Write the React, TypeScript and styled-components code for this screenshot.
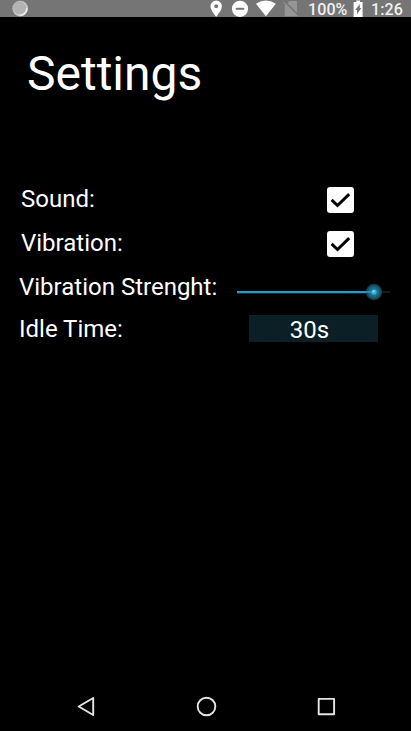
import React, { useState } from 'react';
import styled, { createGlobalStyle } from 'styled-components';

const GlobalStyle = createGlobalStyle`
  * { box-sizing: border-box; }
  body { margin: 0; background: #000; }
`;

const Screen = styled.div`
  display: flex;
  flex-direction: column;
  width: 411px;
  height: 731px;
  background: #000;
  color: #fff;
  font-family: Roboto, sans-serif;
`;

const StatusBar = styled.header`
  display: flex;
  justify-content: space-between;
  height: 17px;
  background: #757575;
`;

const StatusIcons = styled.svg`
  display: block;
  height: 17px;
  flex: none;
`;

const StatusGroup = styled.div`
  display: flex;
  width: 203px;
`;

const StatusText = styled.span<{ $width: number }>`
  width: ${(p) => p.$width}px;
  font-size: 16px;
  font-weight: 500;
  line-height: 20px;
  letter-spacing: 0.1px;
  color: #f0f0f0;
  white-space: nowrap;
`;

const Content = styled.main`
  flex: 1;
  padding-top: 29px;
`;

const Title = styled.h1`
  margin: 0 0 83px 27px;
  font-size: 48px;
  font-weight: 400;
  line-height: 56px;
`;

const Row = styled.div<{ $indent: number; $height: number }>`
  display: flex;
  align-items: flex-start;
  height: ${(p) => p.$height}px;
  padding-left: ${(p) => p.$indent}px;
`;

const Label = styled.label<{ $width: number }>`
  flex: none;
  width: ${(p) => p.$width}px;
  font-size: 24px;
  line-height: 28px;
  white-space: nowrap;
`;

const Box = styled.button`
  display: block;
  width: 27px;
  height: 26px;
  margin-top: 2px;
  padding: 0;
  border: 0;
  border-radius: 3px;
  background: #fff;
`;

const CheckMark = styled.svg`
  display: block;
`;

const Slider = styled.svg`
  display: block;
  margin-top: 9px;
`;

const TimeField = styled.div`
  width: 129px;
  height: 27px;
  background: #0a2026;
  font-size: 24px;
  line-height: 30px;
  text-align: center;
  padding-right: 8px;
`;

const NavBar = styled.nav`
  display: flex;
  justify-content: space-between;
  align-items: center;
  height: 48px;
  padding: 0 72px 0 74px;
`;

function CheckBox({ label }: { label: string }) {
  const [on, setOn] = useState(true);
  return (
    <Box role="checkbox" aria-label={label} aria-checked={on} onClick={() => setOn(!on)}>
      <CheckMark width="27" height="26" viewBox="0 0 27 26">
        {on && <path d="M4.6 12.9 10.5 18.5 22.2 7.2" fill="none" stroke="#050505" strokeWidth="3" />}
      </CheckMark>
    </Box>
  );
}

export default function App() {
  return (
    <Screen>
      <GlobalStyle />
      <StatusBar>
        <StatusIcons width="40" height="17" viewBox="0 0 40 17">
          <circle cx="20.2" cy="8.6" r="7.8" fill="#c9c9c9" />
          <circle cx="19.5" cy="7.8" r="6" fill="#b3b3b3" stroke="#a4a4a4" strokeWidth="1" strokeDasharray="1 1" />
          <path d="M19.5 15.2A7 7 0 0 0 27 8.2" fill="none" stroke="#ededed" strokeWidth="1.6" />
        </StatusIcons>
        <StatusGroup>
          <StatusIcons width="100" height="17" viewBox="208 0 100 17">
            <path fill="#fff" fillRule="evenodd" d="M216.2 .6a5.7 5.7 0 0 0-5.7 5.7c0 4.2 5.7 10.5 5.7 10.5s5.7-6.3 5.7-10.5A5.7 5.7 0 0 0 216.2 .6zm0 3.7a2 2 0 1 1 0 4 2 2 0 0 1 0-4z" />
            <circle cx="240" cy="8.8" r="8.1" fill="#fff" />
            <rect x="235.8" y="7.8" width="8.4" height="2" fill="#757575" />
            <path d="M256 3.8Q265.8-2.8 275.8 3.8L265.9 16.2z" fill="#fff" />
            <path d="M289.5 1H297V16.2H284.7V5.5z" fill="#959595" />
            <path d="m284.4 1.2 14 14" stroke="#717171" strokeWidth="1.3" />
            <path d="m283.6 2.2 14 14" stroke="#929292" strokeWidth="1.2" />
          </StatusIcons>
          <StatusText $width={45}>100%</StatusText>
          <StatusIcons width="18" height="17" viewBox="353 0 18 17">
            <path d="M356.3 .5h3.8V2h2.5v15h-9V2h2.7z" fill="#fff" />
            <path d="M359.8 4v4h1.5L357 14.2V9.9h-1.8z" fill="#757575" />
          </StatusIcons>
          <StatusText $width={40}>1:26</StatusText>
        </StatusGroup>
      </StatusBar>
      <Content>
        <Title>Settings</Title>
        <Row $indent={21} $height={44}>
          <Label $width={306}>Sound:</Label>
          <CheckBox label="Sound" />
        </Row>
        <Row $indent={21} $height={44}>
          <Label $width={306}>Vibration:</Label>
          <CheckBox label="Vibration" />
        </Row>
        <Row $indent={19} $height={42}>
          <Label $width={218}>Vibration Strenght:</Label>
          <Slider width="154" height="20" viewBox="237 282 154 20">
            <defs>
              <radialGradient id="thumbGlow">
                <stop offset="0" stopColor="#2388aa" />
                <stop offset="0.6" stopColor="#1b6680" />
                <stop offset="0.9" stopColor="#123f50" />
                <stop offset="1" stopColor="#0c2c38" />
              </radialGradient>
            </defs>
            <rect x="374" y="291" width="16" height="2" fill="#191919" />
            <rect x="237" y="291" width="137" height="2" fill="#2798c0" />
            <rect x="237" y="293" width="137" height="1" fill="#0b3441" />
            <circle cx="374" cy="292" r="8.3" fill="url(#thumbGlow)" />
            <rect x="365" y="291" width="8" height="2" fill="#2897bd" fillOpacity=".8" />
            <circle cx="374" cy="292" r="2.6" fill="#37b7de" />
            <circle cx="373.6" cy="291.2" r="1" fill="#8fdcf0" />
          </Slider>
        </Row>
        <Row $indent={19} $height={28}>
          <Label $width={230}>Idle Time:</Label>
          <TimeField>30s</TimeField>
        </Row>
      </Content>
      <NavBar>
        <svg width="24" height="24" viewBox="74 695 24 24" fill="none" stroke="#e4e4e4" strokeWidth="1.9" strokeLinejoin="round">
          <path d="M93.2 698V715L78.7 706.5z" />
        </svg>
        <svg width="24" height="24" viewBox="194.5 695 24 24" fill="none" stroke="#e4e4e4" strokeWidth="1.9">
          <circle cx="206" cy="706.5" r="8.8" />
        </svg>
        <svg width="24" height="24" viewBox="315 695 24 24" fill="none" stroke="#e4e4e4" strokeWidth="1.9" strokeLinejoin="round">
          <rect x="318.7" y="698.9" width="15.4" height="15.4" />
        </svg>
      </NavBar>
    </Screen>
  );
}
